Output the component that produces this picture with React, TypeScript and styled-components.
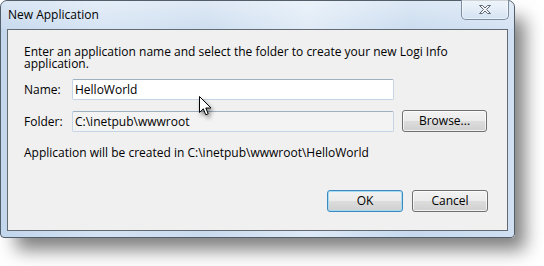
import React from "react";
import styled, { createGlobalStyle } from "styled-components";

const Global = createGlobalStyle`
  html, body { margin: 0; padding: 0; background: #ffffff; }
  body { font-family: "Segoe UI", "Open Sans", "Noto Sans", sans-serif; font-size: 12px; color: #000; }
  * { box-sizing: border-box; }
`;

const Page = styled.div`
  width: 544px;
  height: 266px;
  position: relative;
  overflow: hidden;
`;

const Window = styled.div`
  width: 515px;
  height: 238px;
  border: 1px solid #535e6b;
  border-radius: 7px 7px 4px 4px;
  background: linear-gradient(90deg, #c2d6ec 0%, #d3e2f3 20%, #c9dbee 40%, #dde9f6 60%, #c6d9ee 80%, #d0e0f2 100%);
  box-shadow: 13px 15px 18px -3px rgba(0, 0, 0, 0.5);
  display: flex;
  flex-direction: column;
`;

const TitleBar = styled.div`
  height: 28px;
  display: flex;
  align-items: flex-start;
  justify-content: space-between;
  background: linear-gradient(180deg, rgba(255,255,255,0.4) 0%, rgba(255,255,255,0.1) 100%);
  border-radius: 6px 6px 0 0;
`;

const Title = styled.span`
  padding: 5px 0 0 7px;
  font-size: 12px;
  color: #000;
`;

const CloseButton = styled.div`
  width: 48px;
  height: 20px;
  margin: -1px 5px 0 0;
  border: 1px solid #7d8da0;
  border-top: none;
  border-radius: 0 0 5px 5px;
  background: linear-gradient(180deg, rgba(255,255,255,0.45) 0%, rgba(255,255,255,0.2) 50%, rgba(200,220,240,0.3) 100%);
  box-shadow: inset 0 0 0 1px rgba(255,255,255,0.5);
  display: flex;
  align-items: center;
  justify-content: center;
`;

const Client = styled.div`
  flex: 1;
  margin: 0 6px 6px 6px;
  border: 1px solid #646a72;
  background: #f0f0f0;
  padding: 16px 19px 0 16px;
  display: flex;
  flex-direction: column;
`;

const Intro = styled.p`
  margin: 0;
  line-height: 12px;
  width: 450px;
`;

const Form = styled.div`
  margin-top: 9px;
  display: grid;
  grid-template-columns: 40px 322px 85px;
  column-gap: 8px;
  row-gap: 10px;
  align-items: center;
`;

const Label = styled.span`
  line-height: 15px;
`;

const TextBox = styled.div<{ $readOnly?: boolean }>`
  height: 21px;
  border: 1px solid #c5d5e5;
  border-top-color: #9fb0c3;
  border-radius: 2px;
  background: ${(p) => (p.$readOnly ? "#f3f3f3" : "#ffffff")};
  padding: 1px 0 0 2px;
  line-height: 17px;
  color: #000;
`;

const Button = styled.div<{ $default?: boolean }>`
  height: 22px;
  border: 1px solid ${(p) => (p.$default ? "#3c8ac0" : "#707070")};
  border-radius: 3px;
  background: linear-gradient(180deg, #f2f2f2 0%, #ebebeb 48%, #dddddd 50%, #cfcfcf 100%);
  box-shadow: inset 0 0 0 1px ${(p) => (p.$default ? "#a6dcf3" : "rgba(255,255,255,0.7)")};
  display: flex;
  align-items: center;
  justify-content: center;
  line-height: 15px;
  padding-bottom: 1px;
`;

const Spacer = styled.div``;

const Result = styled.p`
  margin: 13px 0 0 0;
  line-height: 15px;
`;

const Actions = styled.div`
  margin-top: 30px;
  display: flex;
  justify-content: flex-end;
  gap: 9px;
`;

const ActionButton = styled(Button)`
  width: 76px;
`;

const Cursor = styled.svg`
  position: absolute;
  left: 199px;
  top: 96px;
  filter: drop-shadow(2px 3px 2px rgba(0,0,0,0.45));
`;

export default function App() {
  return (
    <Page>
      <Global />
      <Window>
        <TitleBar>
          <Title>New Application</Title>
          <CloseButton>
            <svg width="14" height="11" viewBox="0 0 14 11">
              <path
                d="M1.5 1.5 H4.5 L7 4 L9.5 1.5 H12.5 L8.5 5.5 L12.5 9.5 H9.5 L7 7 L4.5 9.5 H1.5 L5.5 5.5 Z"
                fill="#f4f6f8"
                stroke="#5f6873"
                strokeWidth="1"
                strokeLinejoin="round"
              />
            </svg>
          </CloseButton>
        </TitleBar>
        <Client>
          <Intro>
            Enter an application name and select the folder to create your new Logi Info application.
          </Intro>
          <Form>
            <Label>Name:</Label>
            <TextBox>HelloWorld</TextBox>
            <Spacer />
            <Label>Folder:</Label>
            <TextBox $readOnly>C:\inetpub\wwwroot</TextBox>
            <Button>Browse...</Button>
          </Form>
          <Result>Application will be created in C:\inetpub\wwwroot\HelloWorld</Result>
          <Actions>
            <ActionButton $default>OK</ActionButton>
            <ActionButton>Cancel</ActionButton>
          </Actions>
        </Client>
      </Window>
      <Cursor width="14" height="22" viewBox="0 0 14 22">
        <path
          d="M0.5 0.5 L0.5 16.5 L4.3 12.8 L6.8 18.8 L9.2 17.8 L6.8 12 L12 12 Z"
          fill="#ffffff"
          stroke="#000000"
          strokeWidth="1"
          strokeLinejoin="miter"
        />
      </Cursor>
    </Page>
  );
}
